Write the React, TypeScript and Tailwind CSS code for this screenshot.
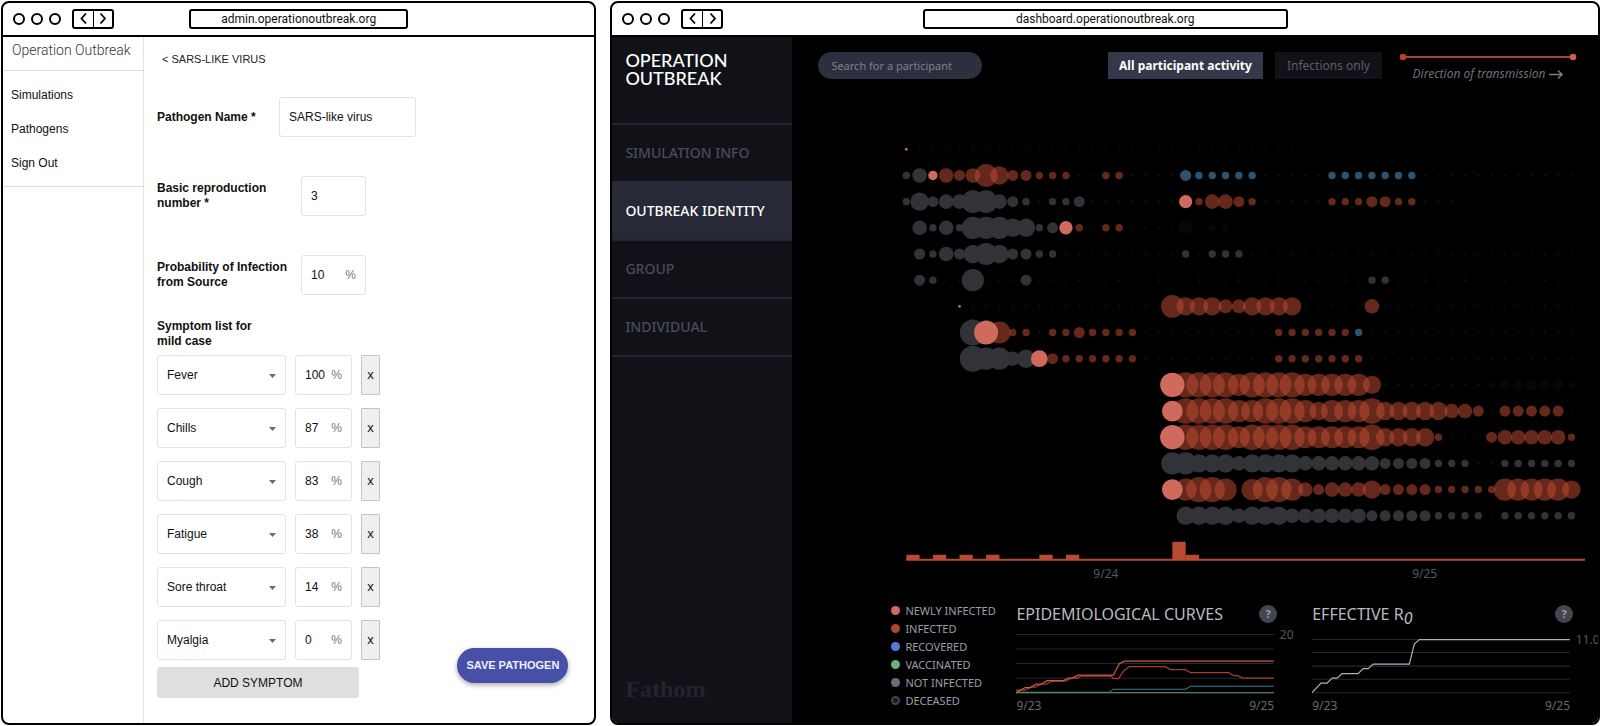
import { useState, type ReactNode } from "react";

/* ---------- Browser frame ---------- */

function BrowserWindow({
  address,
  className,
  children,
}: {
  address: string;
  className: string;
  children: ReactNode;
}) {
  return (
    <section
      className={`flex min-w-0 flex-col overflow-hidden rounded-lg border-2 border-black bg-white ${className}`}
    >
      <header className="grid h-[34px] shrink-0 grid-cols-[1fr_37%_1fr] items-center border-b-2 border-black pb-px">
        <div className="flex items-center gap-[11px] pl-[10px]">
          <div className="flex gap-1.5">
            <span className="size-3 rounded-full border-2 border-black" />
            <span className="size-3 rounded-full border-2 border-black" />
            <span className="size-3 rounded-full border-2 border-black" />
          </div>
          <div className="flex h-5 w-[42px] rounded-[3px] border-2 border-black">
            <button aria-label="Back" className="flex flex-1 items-center justify-center border-r border-black">
              <Chevron d="M7 1.5 2.5 6.5 7 11.5" />
            </button>
            <button aria-label="Forward" className="flex flex-1 items-center justify-center">
              <Chevron d="M2.5 1.5 7 6.5 2.5 11.5" />
            </button>
          </div>
        </div>
        <div className="flex h-5 items-center justify-center rounded-[3px] border-2 border-black font-['Roboto',sans-serif] text-[12px] leading-4 text-[#111]">
          {address}
        </div>
      </header>
      {children}
    </section>
  );
}

function Chevron({ d }: { d: string }) {
  return (
    <svg width="9" height="13" viewBox="0 0 9 13" fill="none" stroke="#000" strokeWidth="1.8">
      <path d={d} />
    </svg>
  );
}

/* ---------- Admin: pathogen form ---------- */

const SYMPTOMS = [
  { name: "Fever", chance: "100" },
  { name: "Chills", chance: "87" },
  { name: "Cough", chance: "83" },
  { name: "Fatigue", chance: "38" },
  { name: "Sore throat", chance: "14" },
  { name: "Myalgia", chance: "0" },
];

function PercentBox({ id, label, value, className }: { id: string; label?: string; value: string; className: string }) {
  return (
    <div className={`flex h-10 items-center rounded-[3px] border border-[#e2e2e2] px-[9px] text-[12px] ${className}`}>
      <input id={id} aria-label={label} defaultValue={value} className="w-full min-w-0 outline-none" />
      <span className="text-[#777]">%</span>
    </div>
  );
}

function AdminWindow() {
  return (
    <BrowserWindow address="admin.operationoutbreak.org" className="flex-[594]">
      <div className="flex flex-1 font-['Liberation_Sans',Arial,sans-serif] text-[12px] text-[#111]">
        <aside className="w-[141px] shrink-0 border-r border-[#e2e2e2]">
          <div className="h-[34px] border-b border-[#dcdcdc] pt-[3px] pl-[9px] font-['Roboto',sans-serif] text-[14px] font-light leading-5 text-[#333]">
            Operation Outbreak
          </div>
          <nav className="flex flex-col gap-[18px] border-b border-[#dcdcdc] pt-4 pb-[15px] pl-2 leading-4">
            <a href="#simulations">Simulations</a>
            <a href="#pathogens">Pathogens</a>
            <a href="#signout">Sign Out</a>
          </nav>
        </aside>

        <main className="flex flex-1 justify-between pl-[13px]">
          <form className="flex flex-col" onSubmit={(e) => e.preventDefault()}>
            <a href="#pathogens" className="mt-[14px] ml-[5px] text-[11px] leading-4 text-[#222]">
              &lt; SARS-LIKE VIRUS
            </a>

            <div className="mt-[30px] flex items-center">
              <label htmlFor="name" className="w-[122px] font-bold leading-[15px]">
                Pathogen Name *
              </label>
              <input
                id="name"
                defaultValue="SARS-like virus"
                className="h-10 w-[137px] rounded-[3px] border border-[#e2e2e2] px-[9px] outline-none"
              />
            </div>

            <div className="mt-[39px] flex items-center">
              <label htmlFor="r0" className="w-[144px] pr-8 font-bold leading-[15px]">
                Basic reproduction number *
              </label>
              <input
                id="r0"
                defaultValue="3"
                className="h-10 w-[65px] rounded-[3px] border border-[#e2e2e2] px-[9px] outline-none"
              />
            </div>

            <div className="mt-[39px] flex items-center">
              <label htmlFor="prob" className="w-[144px] pr-2 font-bold leading-[15px]">
                Probability of Infection from Source
              </label>
              <PercentBox id="prob" value="10" className="w-[65px]" />
            </div>

            <h2 className="mt-6 mb-1.5 w-[110px] font-bold leading-[15px]">Symptom list for mild case</h2>

            <div className="flex flex-col gap-[13px]">
              {SYMPTOMS.map((s) => (
                <div key={s.name} className="flex items-stretch gap-[9px]">
                  <div className="relative w-[129px]">
                    <select
                      aria-label="Symptom"
                      defaultValue={s.name}
                      className="h-10 w-full appearance-none rounded-[3px] border border-[#e2e2e2] bg-white px-[9px] outline-none"
                    >
                      {SYMPTOMS.map((o) => (
                        <option key={o.name}>{o.name}</option>
                      ))}
                    </select>
                    <svg
                      className="pointer-events-none absolute top-[19px] right-[10px]"
                      width="7"
                      height="4"
                      viewBox="0 0 7 4"
                      fill="#6b6b6b"
                    >
                      <path d="M0 0h7L3.500 4z" />
                    </svg>
                  </div>
                  <PercentBox id={`chance-${s.name}`} label={`${s.name} chance`} value={s.chance} className="w-[57px]" />
                  <button
                    type="button"
                    aria-label={`Remove ${s.name}`}
                    className="w-[19px] rounded-[1px] border border-[#c4c4c4] bg-[#efefef] text-[13px]"
                  >
                    x
                  </button>
                </div>
              ))}
            </div>

            <button type="button" className="mt-[7px] h-[31px] w-[202px] rounded-[3px] bg-[#dfdfdf] text-[12px]">
              ADD SYMPTOM
            </button>
          </form>

          <button className="mr-[26px] mb-[40px] h-[35px] w-[111px] self-end rounded-full bg-[#4650a8] text-[11px] font-bold text-[#eef0ff] shadow-[0_2px_5px_rgba(0,0,0,0.35)]">
            SAVE PATHOGEN
          </button>
        </main>
      </div>
    </BrowserWindow>
  );
}

/* ---------- Dashboard: transmission chart ---------- */

type Kind = "new" | "inf" | "rec" | "not" | "gone";
type Run = [start: number, kind: Kind, radii: number[]];
type Track = { from: number; to: number; runs: Run[] };

const COL = 13.31;
const ROW = 26.19;
const X0 = 14.3;
const Y0 = 13.3;

const FILLS: Record<Kind, { fill: string; opacity: number }> = {
  new: { fill: "#d06a5c", opacity: 1 },
  inf: { fill: "#bf4b33", opacity: 0.53 },
  rec: { fill: "#2f5270", opacity: 1 },
  not: { fill: "#323338", opacity: 1 },
  gone: { fill: "#060608", opacity: 1 },
};

const A = 3.7;
const B = 5.5;
const C = 7.3;
const D = 9.2;
const E = 11.1;
const F = 12.7;

const TRACKS: Track[] = [
  { from: 1, to: 29, runs: [[0, "new", [1.4]]] },
  {
    from: 13,
    to: 50,
    runs: [
      [0, "not", [A, C]],
      [2, "new", [4.7]],
      [3, "inf", [C, B, C, 11.4, D, B, B, A, A, A]],
      [15, "inf", [A, A]],
      [21, "rec", [B, A, A, A, A, A]],
      [32, "rec", [A, A, A, A, A, A, A]],
    ],
  },
  {
    from: 10,
    to: 41,
    runs: [
      [0, "not", [A, D, B, C, C, 11.3, 11.3, C, B, A, 0, A, A, B]],
      [21, "new", [6.6]],
      [22, "inf", [A, C, C, B, A]],
      [32, "inf", [A, A, A, B, B, A, A]],
    ],
  },
  {
    from: 14,
    to: 20,
    runs: [
      [1, "not", [C, A, C, A, E, E, E, D, D, A, B]],
      [12, "new", [6.7]],
      [13, "inf", [A, 0, A, A]],
      [21, "gone", [C, 0, A, A]],
    ],
  },
  {
    from: 12,
    to: 50,
    runs: [
      [1, "not", [B, A, C, B, D, E, D, B, B, A, A]],
      [21, "not", [A, 0, A, A, A]],
    ],
  },
  {
    from: 3,
    to: 50,
    runs: [
      [1, "not", [B, A, 0, 0, E, 0, 0, 0, B]],
      [35, "not", [A, A]],
    ],
  },
  {
    from: 5,
    to: 50,
    runs: [
      [4, "new", [1.4]],
      [20, "inf", [11.4, D, D, D, 7, 7, D, D, D, D]],
      [35, "inf", [C]],
    ],
  },
  {
    from: 10,
    to: 50,
    runs: [
      [5, "not", [13]],
      [7, "inf", [E, A, A, 0, A, A, B, A, A, A, A]],
      [6, "new", [12]],
      [28, "inf", [A, A, A, A, A, A]],
      [34, "rec", [A]],
    ],
  },
  {
    from: 18,
    to: 50,
    runs: [
      [5, "not", [13, E, E, C, D]],
      [11, "inf", [B, A, A, A, A, A, A]],
      [10, "new", [8.4]],
      [28, "inf", [A, A, A, A, A, A, A]],
    ],
  },
  {
    from: 36,
    to: 43,
    runs: [
      [21, "inf", [F, F, F, F, E, F, F, F, F, E, E, E, E, E, D]],
      [20, "new", [12.2]],
      [44, "gone", [A, B, B, B, B, B, A]],
    ],
  },
  {
    from: 44,
    to: 50,
    runs: [
      [21, "inf", [F, F, F, F, E, E, F, F, F, E, D, E, E, E, F, D, D, D, D, D, C, C, B, 0, B, B, B, B, B]],
      [20, "new", [10.4]],
    ],
  },
  {
    from: 41,
    to: 43,
    runs: [
      [21, "inf", [F, F, F, F, E, F, F, F, F, E, E, E, E, E, F, D, D, D, D, A, 0, 0, 0, B, C, C, C, C, C, A]],
      [20, "new", [12.2]],
    ],
  },
  {
    from: 43,
    to: 44,
    runs: [
      [20, "not", [E, E, D, D, D, C, D, D, D, D, C, C, C, C, C, C, B, B, B, B, A, A, A, 0, 0, A, A, A, A, A, A]],
    ],
  },
  {
    from: 0,
    to: -1,
    runs: [
      [21, "inf", [E, F, F, E, 0, 10.7, F, F, E, C, B, C, C, C, D, B, B, B, B, A, A, A, A, A, E, E, E, E, E, D]],
      [20, "new", [10.4]],
    ],
  },
  {
    from: 44,
    to: 44,
    runs: [
      [21, "not", [D, D, D, D, C, D, D, D, C, C, C, C, C, C, B, B, B, B, B, A, A, A, A, 0, A, A, A, A, A, A]],
    ],
  },
];

const BARS: [col: number, height: number][] = [
  [0, 5],
  [2, 5],
  [4, 5],
  [6, 5],
  [10, 5],
  [12, 5],
  [20, 18],
  [21, 5],
];

function TransmissionChart() {
  return (
    <svg
      viewBox="0 0 700 448"
      className="block w-full font-['Noto_Sans',sans-serif] text-[12px]"
      role="img"
      aria-label="Participant activity over time"
    >
      {TRACKS.map((t, r) => {
        const y = Y0 + r * ROW;
        const taken = new Set<number>();
        t.runs.forEach(([s, , radii]) => radii.forEach((v, i) => v > 0 && taken.add(s + i)));
        const dots: number[] = [];
        for (let c = t.from; c <= t.to; c++) if (!taken.has(c)) dots.push(c);
        return (
          <g key={r}>
            {dots.map((c) => (
              <circle key={`d${c}`} cx={X0 + c * COL} cy={y} r={0.8} fill="#1d1d21" />
            ))}
            {t.runs.map(([s, kind, radii], k) =>
              radii.map((v, i) =>
                v > 0 ? (
                  <circle
                    key={`${k}-${i}`}
                    cx={X0 + (s + i) * COL}
                    cy={y}
                    r={v}
                    fill={FILLS[kind].fill}
                    fillOpacity={FILLS[kind].opacity}
                  />
                ) : null,
              ),
            )}
          </g>
        );
      })}
      {BARS.map(([c, h]) => (
        <rect key={c} x={X0 + c * COL} y={424 - h} width={COL} height={h} fill="#bb4a33" />
      ))}
      <rect x={X0} y="423" width="679" height="2" fill="#bb4a33" />
      <text x="214" y="442" textAnchor="middle" fill="#565863">
        9/24
      </text>
      <text x="533" y="442" textAnchor="middle" fill="#565863">
        9/25
      </text>
    </svg>
  );
}

const LEGEND = [
  { label: "NEWLY INFECTED", dot: "bg-[#d06a5c]" },
  { label: "INFECTED", dot: "bg-[#ae4530]" },
  { label: "RECOVERED", dot: "bg-[#557cdb]" },
  { label: "VACCINATED", dot: "bg-[#6fae7d]" },
  { label: "NOT INFECTED", dot: "bg-[#6c6c7d]" },
  { label: "DECEASED", dot: "border-2 border-[#44444f] bg-[#191920]" },
];

function MiniChart({
  title,
  max,
  grid,
  children,
}: {
  title: ReactNode;
  max: string;
  grid: number[];
  children: ReactNode;
}) {
  return (
    <figure className="min-w-0 flex-1">
      <figcaption className="flex h-6 items-center justify-between">
        <h3 className="text-[16px] leading-6 whitespace-nowrap text-[#b9bac0]">{title}</h3>
        <button
          aria-label="Help"
          className="mr-[-3px] flex size-[18px] items-center justify-center rounded-full bg-[#43454f] text-[11px] font-bold text-[#9b9dab]"
        >
          ?
        </button>
      </figcaption>
      <svg viewBox="0 0 257 70" className="block w-full overflow-visible text-[12px]" fill="none">
        {grid.map((y) => (
          <path key={y} d={`M0 ${y}H257`} stroke="#272731" />
        ))}
        {children}
        <text x="263" y={grid[0] + 4} fill="#565863">
          {max}
        </text>
      </svg>
      <div className="mt-0.5 flex justify-between text-[12px] leading-4 text-[#686a76]">
        <span>9/23</span>
        <span>9/25</span>
      </div>
    </figure>
  );
}

const NAV = ["SIMULATION INFO", "OUTBREAK IDENTITY", "GROUP", "INDIVIDUAL"];

function DashboardWindow() {
  const [active, setActive] = useState("OUTBREAK IDENTITY");
  return (
    <BrowserWindow address="dashboard.operationoutbreak.org" className="flex-[990]">
      <div className="flex flex-1 bg-black font-['Noto_Sans',sans-serif]">
        <aside className="flex w-[180px] shrink-0 flex-col bg-[#111217]">
          <h1 className="h-[86px] pt-[14px] pl-[13px] font-['Lato',sans-serif] text-[18px] leading-[18px] font-medium text-white">
            OPERATION
            <br />
            OUTBREAK
          </h1>
          <nav className="flex flex-col border-b-2 border-[#23252d]">
            {NAV.map((n) => (
              <button
                key={n}
                onClick={() => setActive(n)}
                className={
                  n === active
                    ? "h-[58px] border-t-2 border-[#272936] bg-[#272936] pb-0.5 pl-[13px] text-left text-[14px] font-medium text-white"
                    : "h-[58px] border-t-2 border-[#23252d] pb-0.5 pl-[13px] text-left text-[14px] font-medium text-[#4a4b58]"
                }
              >
                {n}
              </button>
            ))}
          </nav>
          <div className="mt-auto mb-[18px] pl-[13px] font-['Liberation_Serif',serif] text-[24px] leading-8 font-bold text-[#24252c]">
            Fathom
          </div>
        </aside>

        <main className="flex min-w-0 flex-1 flex-col">
          <div className="flex items-start pt-[15px] pr-[21px] pl-[26px]">
            <input
              aria-label="Search for a participant"
              placeholder="Search for a participant"
              className="h-[27px] w-[164px] rounded-full bg-[#2b2f3e] px-[13px] text-[11px] text-white outline-none placeholder:text-[#7d8090]"
            />
            <div className="ml-auto flex gap-3">
              <button className="h-[27px] w-[155px] bg-[#34384a] text-[12px] font-bold text-white">
                All participant activity
              </button>
              <button className="h-[27px] w-[107px] bg-[#111217] text-[12px] text-[#5b5d6a]">Infections only</button>
            </div>
            <div className="ml-[17px] flex w-[178px] flex-col items-center">
              <svg width="178" height="10" viewBox="0 0 178 10">
                <path d="M4 5H174" stroke="#a8432f" strokeWidth="2" />
                <circle cx="4" cy="5" r="3.300" fill="#b1462f" />
                <circle cx="174" cy="5" r="3.300" fill="#c8604f" />
              </svg>
              <div className="mt-1 flex items-center gap-1 text-[12px] leading-4 whitespace-nowrap text-[#6d6f7c] italic">
                Direction of transmission
                <svg width="14" height="9" viewBox="0 0 14 9" fill="none" stroke="#7b7d8a" strokeWidth="1.500">
                  <path d="M0 4.500H13M9 .5l4 4-4 4" />
                </svg>
              </div>
            </div>
          </div>

          <div className="mt-[54px] pr-[6px] pl-[100px]">
            <TransmissionChart />
          </div>

          <div className="mt-[18px] flex pr-[28px] pl-[99px]">
            <ul className="flex w-[125px] shrink-0 flex-col text-[11px] leading-[18px] text-[#9c9eaa]">
              {LEGEND.map((l) => (
                <li key={l.label} className="flex items-center gap-[5px]">
                  <span className={`size-[9px] rounded-full ${l.dot}`} />
                  {l.label}
                </li>
              ))}
            </ul>
            <div className="flex flex-1 gap-[38px]">
              <MiniChart title="EPIDEMIOLOGICAL CURVES" max="20" grid={[8.5, 23, 37.5, 52, 66.5]}>
                <path d="M0 66H93l4-3H169l5-3H257" stroke="#3b789c" />
                <path
                  d="M0 64H9l6-3h4l6-3h5l6-3H49l6-3h6l4-2H95l2 2.500h5l6-8.500 5-3.500h36l5 3h15l5 3h38l5 3h4l5 2.500H257"
                  stroke="#a4412d"
                  strokeWidth="1.200"
                />
                <path
                  d="M0 66.500l9-5h5l6-3.500h5l6-3.500H47l5-2.500h4l6-3H97l6-11.500 5-2.500H257"
                  stroke="#c95a44"
                  strokeWidth="1.200"
                />
                <path d="M0 66.500H257" stroke="#5f9a6e" />
              </MiniChart>
              <MiniChart
                title={
                  <>
                    EFFECTIVE R<sub className="text-[16px] italic">0</sub>
                  </>
                }
                max="11.0"
                grid={[13.5, 26.5, 40, 53, 66.5]}
              >
                <path
                  d="M0 66.500l9-9.500h6l5-5h5l5-4.500H46l5-5h5l5-4.500H97l5-20 5-4.500H257"
                  stroke="#b0b0ba"
                  strokeWidth="1.200"
                />
              </MiniChart>
            </div>
          </div>
        </main>
      </div>
    </BrowserWindow>
  );
}

export default function App() {
  return (
    <div className="flex min-h-screen gap-[14px] bg-white pt-px pb-px pl-px">
      <AdminWindow />
      <DashboardWindow />
    </div>
  );
}
